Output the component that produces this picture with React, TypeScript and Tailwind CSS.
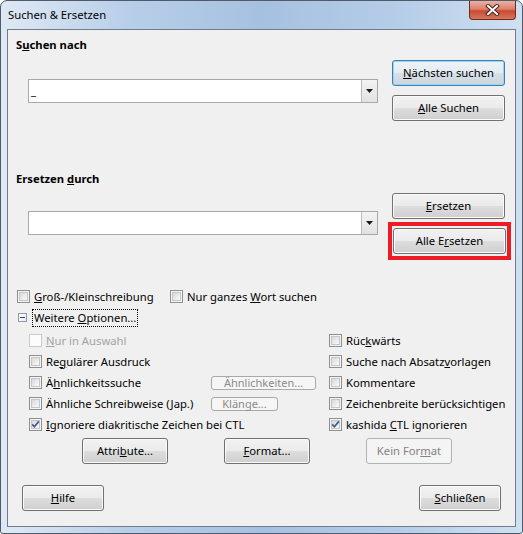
import React from 'react';

const btnBase =
  'flex items-center justify-center rounded-[3px] border border-[#707070] bg-[linear-gradient(to_bottom,#f2f2f2_0%,#ebebeb_48%,#dddddd_52%,#cfcfcf_100%)] shadow-[inset_0_0_0_1px_#fbfbfb]';
const btnDefault =
  'flex items-center justify-center rounded-[3px] border border-[#3c7fb1] bg-[linear-gradient(to_bottom,#eef4f8_0%,#e4ecf2_48%,#d7e0e7_52%,#cbd5dd_100%)] shadow-[inset_0_0_0_1px_#9ad6f4]';
const btnDisabled =
  'flex items-center justify-center rounded-[3px] border border-[#adb2b5] bg-[#f4f4f4] text-[#838383]';

const Check = ({ checked = false, disabled = false }: { checked?: boolean; disabled?: boolean }) => (
  <span
    className={`relative flex h-[13px] w-[13px] shrink-0 items-center justify-center border ${
      disabled ? 'border-[#cacaca] bg-[#fcfcfc]' : 'border-[#8e8f8f] bg-[#f4f4f4]'
    }`}
  >
    {!disabled && (
      <span className="h-[9px] w-[9px] border border-[#c6c6c6] bg-[linear-gradient(135deg,#d8d8d8_0%,#ebebeb_55%,#fafafa_100%)]" />
    )}
    {checked && (
      <svg className="absolute left-0 top-0" width="11" height="11" viewBox="0 0 11 11">
        <path d="M2.2 5.4 L4.4 7.8 L8.8 2.4" fill="none" stroke="#3d5b94" strokeWidth="1.7" />
      </svg>
    )}
  </span>
);

const Combo = ({ className = '', caret = false }: { className?: string; caret?: boolean }) => (
  <div className={`flex h-[24px] w-[350px] border border-[#a4a8b0] bg-white ${className}`}>
    <div className="flex flex-1 items-center pl-[2px]">{caret ? '_' : ''}</div>
    <div className="flex w-[16px] items-center justify-center border-l border-[#b8bcc2] bg-[linear-gradient(to_bottom,#f3f3f3,#e2e2e2)]">
      <svg width="7" height="4" viewBox="0 0 7 4">
        <path d="M0 0 H7 L3.5 4 Z" fill="#1a1a1a" />
      </svg>
    </div>
  </div>
);

const Row = ({ children, className = '' }: { children: React.ReactNode; className?: string }) => (
  <div className={`flex h-[21px] items-center whitespace-nowrap ${className}`}>{children}</div>
);

export default function App() {
  return (
    <div className="h-[534px] w-[523px] bg-white font-['Segoe_UI','Noto_Sans',sans-serif] text-[11.25px] leading-[16px] text-black">
      <div className="flex h-full flex-col rounded-t-[7px] rounded-b-[3px] border border-[#4f5b6a] bg-[linear-gradient(to_right,#dfe9f5_0%,#b7cee8_25%,#a6c1df_50%,#b4cce7_75%,#cfe0f1_100%)]">
        {/* title bar */}
        <div className="flex h-[28px] items-start">
          <div className="pl-[7px] pt-[6px]">Suchen &amp; Ersetzen</div>
          <div className="ml-auto mr-[6px] flex h-[19px] w-[47px] items-center justify-center rounded-b-[4px] border border-t-0 border-[#6b2b20] bg-[linear-gradient(to_bottom,#eab1a4_0%,#dc806c_45%,#c84a32_55%,#d7785b_100%)]">
            <svg width="15" height="12" viewBox="0 0 15 12">
              <path d="M3 2 L12 10 M12 2 L3 10" stroke="#4a2420" strokeWidth="4" strokeLinecap="square" />
              <path d="M3 2 L12 10 M12 2 L3 10" stroke="#ffffff" strokeWidth="2" strokeLinecap="square" />
            </svg>
          </div>
        </div>

        {/* client area */}
        <div className="mx-[6px] mb-[6px] flex-1 border border-[#707c89] bg-[#f0f0f0]">
          {/* search */}
          <div className="flex">
            <div className="w-[384px]">
              <div className="mt-[7px] pl-[8px] font-bold">
                S<u>u</u>chen nach
              </div>
              <Combo className="ml-[20px] mt-[26px]" caret />
            </div>
            <div className="flex flex-col gap-[9px] pt-[30px]">
              <div className={`${btnDefault} h-[26px] w-[113px]`}>
                <span>
                  <u>N</u>ächsten suchen
                </span>
              </div>
              <div className={`${btnBase} h-[26px] w-[113px]`}>
                <span>
                  <u>A</u>lle Suchen
                </span>
              </div>
            </div>
          </div>

          {/* replace */}
          <div className="flex">
            <div className="w-[380px]">
              <div className="mt-[50px] pl-[8px] font-bold">
                Ersetzen <u>d</u>urch
              </div>
              <Combo className="ml-[20px] mt-[24px]" />
            </div>
            <div className="flex flex-col pt-[72px]">
              <div className={`${btnBase} ml-[4px] h-[26px] w-[113px]`}>
                <span>
                  <u>E</u>rsetzen
                </span>
              </div>
              <div className="mt-[3px] w-[123px] border-[4px] border-[#ed1c24] px-[1px] py-[2px]">
                <div className={`${btnBase} h-[26px] w-[113px]`}>
                  <span>
                    Alle E<u>r</u>setzen
                  </span>
                </div>
              </div>
            </div>
          </div>

          {/* options */}
          <Row className="mt-[26px] pl-[9px]">
            <div className="flex w-[153px] items-center gap-[4px]">
              <Check />
              <span>
                <u>G</u>roß-/Kleinschreibung
              </span>
            </div>
            <div className="flex items-center gap-[4px]">
              <Check />
              <span>
                Nur ganzes <u>W</u>ort suchen
              </span>
            </div>
          </Row>
          <Row className="pl-[10px]">
            <span className="flex h-[9px] w-[9px] items-center justify-center border border-[#8d99a8] bg-[linear-gradient(135deg,#ffffff,#e4e8ee)]">
              <span className="h-px w-[5px] bg-[#2f4a78]" />
            </span>
            <span className="ml-[5px] border border-dotted border-black px-[1px]">
              Weitere <u>O</u>ptionen...
            </span>
          </Row>

          <div className="mt-[2px] flex">
            <div className="w-[321px] pl-[21px]">
              <Row>
                <Check disabled />
                <span className="ml-[4px] text-[#a3a3a3]">
                  <u>N</u>ur in Auswahl
                </span>
              </Row>
              <Row>
                <Check />
                <span className="ml-[4px]">
                  Re<u>g</u>ulärer Ausdruck
                </span>
              </Row>
              <Row>
                <Check />
                <span className="ml-[4px] w-[165px]">
                  Ä<u>h</u>nlichkeitssuche
                </span>
                <div className="flex h-[14px] w-[105px] items-center justify-center rounded-[3px] border border-[#a9a9a9] bg-[#f6f6f6] text-[11px] leading-[12px] text-[#8a8a8a]">
                  Ähnlichkeiten...
                </div>
              </Row>
              <Row>
                <Check />
                <span className="ml-[4px] w-[165px]">
                  Ähnliche Schreibweise (<u>J</u>ap.)
                </span>
                <div className="flex h-[14px] w-[67px] items-center justify-center rounded-[3px] border border-[#a9a9a9] bg-[#f6f6f6] text-[11px] leading-[12px] text-[#8a8a8a]">
                  Klänge...
                </div>
              </Row>
              <Row>
                <Check checked />
                <span className="ml-[4px]">
                  <u>I</u>gnoriere diakritische Zeichen bei CTL
                </span>
              </Row>
            </div>
            <div>
              <Row>
                <Check />
                <span className="ml-[4px]">
                  Rüc<u>k</u>wärts
                </span>
              </Row>
              <Row>
                <Check />
                <span className="ml-[4px]">
                  Suche nach Absatz<u>v</u>orlagen
                </span>
              </Row>
              <Row>
                <Check />
                <span className="ml-[4px]">Kommentare</span>
              </Row>
              <Row>
                <Check />
                <span className="ml-[4px]">Zeichenbreite berücksichtigen</span>
              </Row>
              <Row>
                <Check checked />
                <span className="ml-[4px]">
                  kashida <u>C</u>TL ignorieren
                </span>
              </Row>
            </div>
          </div>

          {/* attribute buttons */}
          <div className="mt-[3px] flex gap-[56px] pl-[74px]">
            <div className={`${btnBase} h-[26px] w-[86px]`}>
              <span>
                Attri<u>b</u>ute...
              </span>
            </div>
            <div className={`${btnBase} h-[26px] w-[86px]`}>
              <span>
                <u>F</u>ormat...
              </span>
            </div>
            <div className={`${btnDisabled} h-[26px] w-[86px]`}>
              <span>
                Kein For<u>m</u>at
              </span>
            </div>
          </div>

          {/* footer */}
          <div className="mt-[21px] flex justify-between px-[14px]">
            <div className={`${btnBase} h-[26px] w-[82px]`}>
              <span>
                <u>H</u>ilfe
              </span>
            </div>
            <div className={`${btnBase} h-[26px] w-[82px]`}>
              <span>
                <u>S</u>chließen
              </span>
            </div>
          </div>
        </div>
      </div>
    </div>
  );
}
